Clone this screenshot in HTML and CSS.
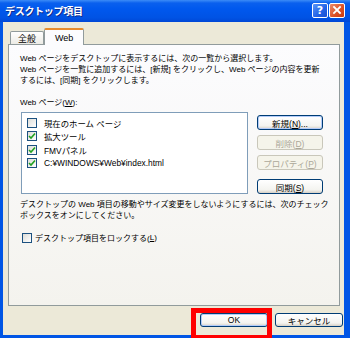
FILE: index.html
```html
<!DOCTYPE html>
<html lang="ja">
<head>
  <meta charset="UTF-8">
  <title>デスクトップ項目</title>
  <link rel="stylesheet" href="styles.css">
</head>
<body>

  <div class="window">

    <div class="titlebar">
      <span class="title">デスクトップ項目</span>
      <div class="caption-buttons">
        <span class="cap-btn help">?</span>
        <span class="cap-btn close">
          <svg width="10" height="10" viewBox="0 0 10 10"><path d="M2 2 L8 8 M8 2 L2 8" stroke="#fff" stroke-width="1.8" stroke-linecap="square"/></svg>
        </span>
      </div>
    </div>

    <div class="client">

      <div class="tabs">
        <span class="tab">全般</span>
        <span class="tab active">Web</span>
      </div>

      <div class="panel">
        <p class="intro">Web ページをデスクトップに表示するには、次の一覧から選択します。<br>Web ページを一覧に追加するには、[新規] をクリックし、Web ページの内容を更新<br>するには、[同期] をクリックします。</p>

        <div class="field-label">Web ページ(<u>W</u>):</div>

        <div class="list-row">
          <div class="listbox">
            <div class="item"><span class="check"></span>現在のホーム ページ</div>
            <div class="item"><span class="check on"><svg width="8" height="8" viewBox="0 0 8 8"><path d="M1 4 L3 6 L7 1.5" fill="none" stroke="#21a121" stroke-width="1.6"/></svg></span>拡大ツール</div>
            <div class="item"><span class="check on"><svg width="8" height="8" viewBox="0 0 8 8"><path d="M1 4 L3 6 L7 1.5" fill="none" stroke="#21a121" stroke-width="1.6"/></svg></span>FMVパネル</div>
            <div class="item"><span class="check on"><svg width="8" height="8" viewBox="0 0 8 8"><path d="M1 4 L3 6 L7 1.5" fill="none" stroke="#21a121" stroke-width="1.6"/></svg></span>C:¥WINDOWS¥Web¥index.html</div>
          </div>

          <div class="side-buttons">
            <button class="btn default">新規(<u>N</u>)...</button>
            <button class="btn" disabled>削除(<u>D</u>)</button>
            <button class="btn" disabled>プロパティ(<u>P</u>)</button>
            <button class="btn sync">同期(<u>S</u>)</button>
          </div>
        </div>

        <p class="note">デスクトップの Web 項目の移動やサイズ変更をしないようにするには、次のチェック<br>ボックスをオンにしてください。</p>

        <div class="lock"><span class="check"></span>デスクトップ項目をロックする(<u>L</u>)</div>
      </div>

      <div class="dialog-buttons">
        <button class="btn default">OK</button>
        <button class="btn">キャンセル</button>
      </div>

    </div>

    <div class="highlight"></div>

  </div>

</body>
</html>
```

FILE: styles.css
```css
body {
  margin: 0;
  font-family: "Liberation Sans", "Noto Sans CJK JP", sans-serif;
  font-size: 8px;
  color: #000;
}

.window {
  position: relative;
  width: 350px;
  height: 338px;
  display: flex;
  flex-direction: column;
  background: #0055e5;
  box-sizing: border-box;
  padding: 0 6px 3px 3px;
}

.titlebar {
  height: 22px;
  margin: 0 -6px 0 -3px;
  padding: 0 5px 0 5px;
  display: flex;
  align-items: center;
  justify-content: space-between;
  background: linear-gradient(#3c8cf7 0, #0a60ee 3px, #0058ee 40%, #0053e4 80%, #0047d6 100%);
}

.title {
  color: #fff;
  font-weight: bold;
  font-size: 10px;
  letter-spacing: -0.3px;
  text-shadow: 1px 1px 0 #0f2c8c;
  margin-top: -1px;
}

.caption-buttons {
  display: flex;
  gap: 1px;
  margin-top: -2px;
}

.cap-btn {
  width: 14px;
  height: 13px;
  border: 1px solid #fff;
  border-radius: 2px;
  display: flex;
  align-items: center;
  justify-content: center;
  color: #fff;
  font-family: "DejaVu Sans", sans-serif;
  font-weight: bold;
  font-size: 11px;
}

.help {
  background: linear-gradient(135deg, #5b96f8, #2162e6 60%, #1b4fd0);
}

.close {
  background: linear-gradient(135deg, #ec8b6c, #dc4f24 60%, #c83a10);
}

.client {
  flex: 1;
  background: #ece9d8;
  padding: 6px 4px 0 5px;
  display: flex;
  flex-direction: column;
}

.tabs {
  display: flex;
  align-items: flex-end;
  height: 16px;
  padding-left: 2px;
}

.tab {
  height: 12px;
  padding: 0 7px;
  border: 1px solid #919b9c;
  border-bottom: none;
  border-radius: 2px 2px 0 0;
  background: linear-gradient(#fff, #ecebe5);
  display: flex;
  align-items: center;
  font-size: 9px;
}

.tab.active {
  height: 15px;
  margin-bottom: -1px;
  padding: 0 10px;
  background: #fcfcfe;
  border-top: 2px solid #e68b2c;
  position: relative;
  z-index: 1;
}

.panel {
  height: 262px;
  border: 1px solid #919b9c;
  background: linear-gradient(#fcfcfe, #f4f3ee);
  box-sizing: border-box;
  padding: 8px 0 0 11px;
}

.intro,
.note {
  margin: 0;
  line-height: 11px;
  white-space: nowrap;
}

.field-label {
  margin-top: 11px;
  line-height: 11px;
}

.list-row {
  display: flex;
  margin-top: 4px;
  align-items: flex-start;
}

.listbox {
  width: 227px;
  height: 82px;
  box-sizing: border-box;
  border: 1px solid #7f9db9;
  background: #fff;
  margin-left: 1px;
  padding: 3px 0 0 5px;
  font-size: 8.4px;
}

.item {
  height: 13.5px;
  display: flex;
  align-items: center;
}

.check {
  width: 8px;
  height: 8px;
  border: 1px solid #1c5180;
  background: linear-gradient(135deg, #dcdcd7, #fff);
  display: inline-flex;
  align-items: center;
  justify-content: center;
  margin-right: 7px;
  flex: none;
}

.side-buttons {
  display: flex;
  flex-direction: column;
  gap: 5px;
  margin-left: 9px;
  margin-top: 3px;
}

.btn {
  width: 66px;
  height: 15px;
  padding: 0;
  font-family: inherit;
  font-size: 8.5px;
  color: #000;
  border: 1px solid #003c74;
  border-radius: 3px;
  background: linear-gradient(#fff, #f4f4f0 75%, #d6d0c5);
  box-sizing: border-box;
}

.btn.default {
  box-shadow: inset 0 0 0 1px #b3ccf9;
}

.btn:disabled {
  border-color: #c9c7ba;
  background: #f5f4ea;
  color: #aca899;
}

.btn.sync {
  margin-top: 4px;
}

.note {
  margin-top: 5px;
}

.lock {
  margin-top: 11px;
  margin-left: 2px;
  display: flex;
  align-items: center;
}

.lock .check {
  margin-right: 3px;
}

.dialog-buttons {
  display: flex;
  justify-content: flex-end;
  gap: 7px;
  margin-top: 7px;
  margin-right: -3px;
}

.dialog-buttons .btn {
  width: 68px;
  height: 14px;
}

.highlight {
  position: absolute;
  left: 191px;
  top: 308px;
  width: 81px;
  height: 30px;
  border: 5px solid #ff0000;
  border-bottom-width: 3px;
  box-sizing: border-box;
}
```
